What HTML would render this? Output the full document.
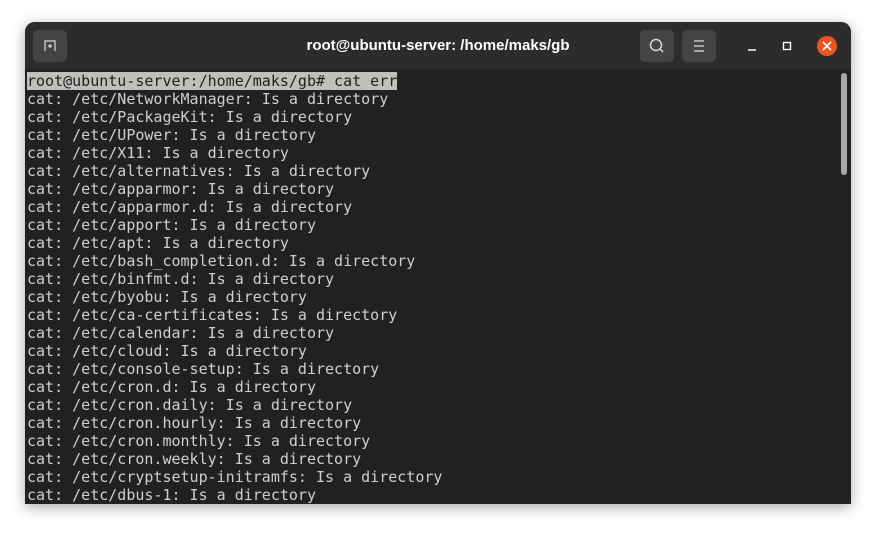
<!DOCTYPE html><html><head><style>
body{margin:0;width:876px;height:533px;background:#fff;position:relative;overflow:hidden;font-family:"Liberation Sans",sans-serif}
.win{position:absolute;left:25px;top:22px;width:826px;height:482px;background:#212121;border-radius:10px 10px 0 0;box-shadow:0 3px 14px rgba(0,0,0,.35);overflow:hidden}
.hdr{position:absolute;left:0;top:0;width:826px;height:47px;background:#2c2c2c}
.btn{position:absolute;top:8px;width:34px;height:32px;background:#444;border-radius:5px}
.title{position:absolute;left:0;right:0;top:15px;text-align:center;color:#fff;font-weight:bold;font-size:15px}
pre{position:absolute;left:2px;top:50px;margin:0;font-family:"DejaVu Sans Mono",monospace;font-size:15px;line-height:18px;color:#d0cfcc}
.hl{background:#c0bfbc;color:#1e1e1e}
.sb{position:absolute;left:816px;top:51px;width:6px;height:102px;background:#a9a9a9;border-radius:3px}
</style></head><body>
<div class="win">
<div class="hdr">
<div class="btn" style="left:8px"><svg width="34" height="32"><path d="M12 21V11h10v10M15 16h4M17 14v4" stroke="#ddd" stroke-width="1.2" fill="none"/></svg></div>
<div class="title">root@ubuntu-server: /home/maks/gb</div>
<div class="btn" style="left:615px"><svg width="34" height="32"><circle cx="16" cy="15" r="5.5" stroke="#ddd" stroke-width="1.4" fill="none"/><path d="M20 19l3 3" stroke="#ddd" stroke-width="1.5"/></svg></div>
<div class="btn" style="left:657px"><svg width="34" height="32"><path d="M12 11h10M12 16h10M12 21h10" stroke="#ddd" stroke-width="1.2"/></svg></div>
<svg style="position:absolute;left:715px;top:12px" width="100" height="26"><path d="M8 16h8" stroke="#fff" stroke-width="1.5"/><rect x="43.5" y="8.5" width="7" height="7" stroke="#fff" stroke-width="1.4" fill="none"/><circle cx="87" cy="12" r="10" fill="#e95420"/><path d="M83 8l8 8M91 8l-8 8" stroke="#fff" stroke-width="1.6"/></svg>
</div>
<pre><span class="hl">root@ubuntu-server:/home/maks/gb# cat err</span>
cat: /etc/NetworkManager: Is a directory
cat: /etc/PackageKit: Is a directory
cat: /etc/UPower: Is a directory
cat: /etc/X11: Is a directory
cat: /etc/alternatives: Is a directory
cat: /etc/apparmor: Is a directory
cat: /etc/apparmor.d: Is a directory
cat: /etc/apport: Is a directory
cat: /etc/apt: Is a directory
cat: /etc/bash_completion.d: Is a directory
cat: /etc/binfmt.d: Is a directory
cat: /etc/byobu: Is a directory
cat: /etc/ca-certificates: Is a directory
cat: /etc/calendar: Is a directory
cat: /etc/cloud: Is a directory
cat: /etc/console-setup: Is a directory
cat: /etc/cron.d: Is a directory
cat: /etc/cron.daily: Is a directory
cat: /etc/cron.hourly: Is a directory
cat: /etc/cron.monthly: Is a directory
cat: /etc/cron.weekly: Is a directory
cat: /etc/cryptsetup-initramfs: Is a directory
cat: /etc/dbus-1: Is a directory</pre>
<div class="sb"></div>
</div>
</body></html>
